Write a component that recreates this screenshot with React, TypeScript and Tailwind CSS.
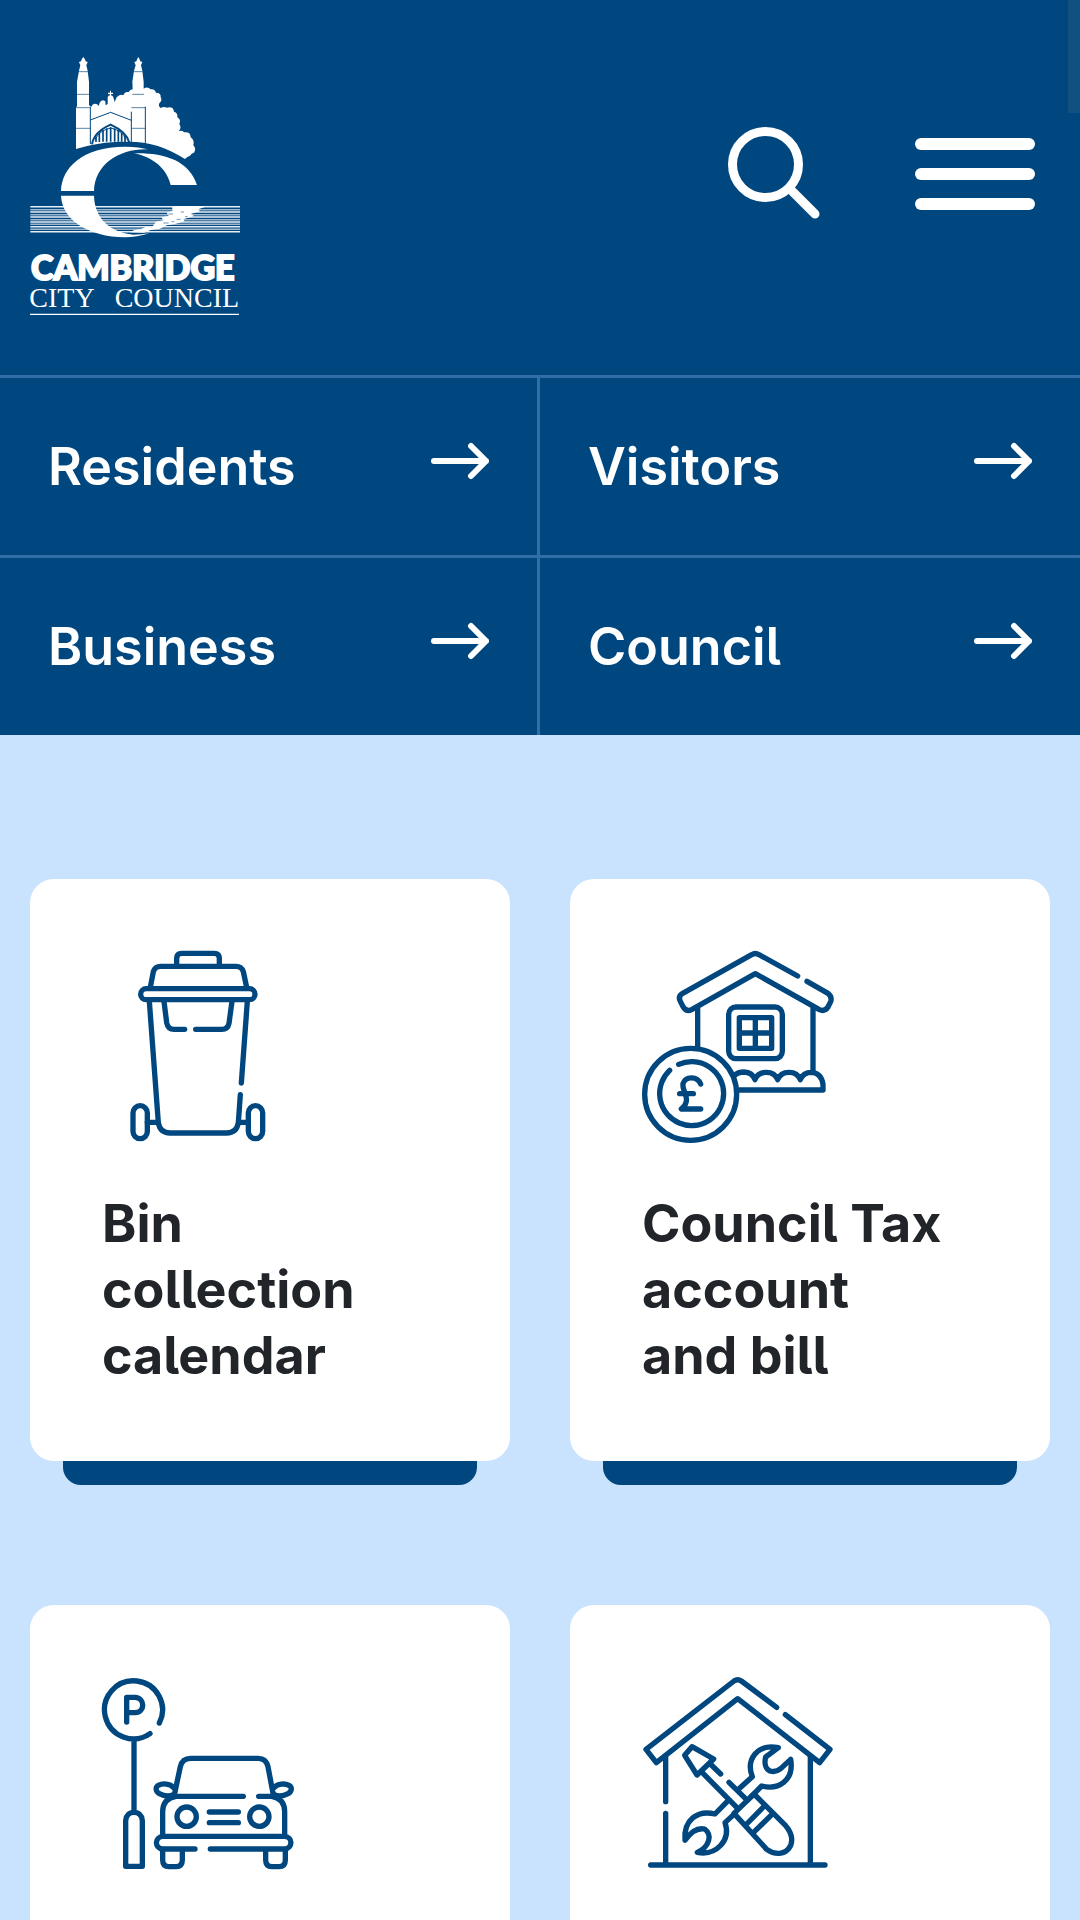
import type { ReactNode } from 'react';

const NAV_LINKS = ['Residents', 'Visitors', 'Business', 'Council'];

// y position of each ripple in the logo's river
const RIVER_LINES = [500, 509, 516, 524, 531, 539, 546, 553, 560, 568, 575];

function Logo() {
  return (
    <svg viewBox="30 24 630 837" className="w-[210px] h-[279px]" fill="#fff" role="img" aria-label="Cambridge City Council">
      {/* Towers, chapel and trees */}
      <path d="M168 327 L168 200 L171 200 L171 125 L177 92 L181 76 L177 66 L183 64 L186 56 L190 51 L194 56 L197 64 L203 66 L199 76 L203 92 L207 125 L207 196 L214 200 Q218 190 225 191 Q232 191 236 198 L239 188 Q247 176 256 184 L257 196 L263 192 L263 172 Q265 166 270 166 L270 163 L264 162 L264 158 L270 158 L270 152 L273 152 L273 158 L279 158 L279 162 L273 163 L273 166 Q279 167 280 172 L284 186 L290 172 Q300 160 310 166 Q314 154 326 156 Q330 148 338 148 L337 125 L342 92 L347 76 L343 66 L349 64 L352 56 L355 51 L358 56 L361 64 L367 66 L363 76 L367 92 L371 125 L371 146 Q382 138 392 148 Q404 146 408 158 Q424 158 422 172 Q428 182 418 190 Q414 198 422 204 Q432 198 440 203 Q460 198 462 215 Q474 218 472 232 Q484 238 478 252 Q486 264 476 274 Q486 270 492 277 Q512 274 512 292 Q524 300 520 316 Q530 326 522 338 Q514 340 510 347 Q502 350 495 357 C440 322 390 305 325 305 C265 304 215 312 168 327 Z" />
      <g fill="none" stroke="#00477f" strokeWidth="2">
        <path d="M175 95 H204 M171 163 H208 M166 203 H210 M166 265 H211 M341 95 H368 M337 163 H372 M334 203 H376 M334 265 H376" />
        <path d="M211 200 V312 M334 215 V306 M376 200 V312 M211 240 L272 217 L334 241" strokeWidth="3" />
        <path d="M216 313 Q222 276 272 254 Q320 276 328 308" strokeWidth="6" />
        <path d="M228 306 V290 M238 306 V278 M249 305 V270 M260 305 V265 M272 305 V262 M284 305 V265 M295 305 V270 M305 305 V278 M315 306 V288" strokeWidth="5" />
        <path d="M226 299 Q236 272 272 264 Q308 272 318 299" strokeWidth="3" />
      </g>

      {/* River */}
      {RIVER_LINES.map((y, i) => (
        <path key={y} d={`M31 ${y} H660`} stroke={i % 2 ? '#9db7cf' : '#e4eef6'} strokeWidth="4.5" />
      ))}

      {/* Letter C formed by the bridge and its reflection */}
      <path d="M123 453 C125 385 185 320 315 320 Q360 321 384 328 C300 325 224 372 222 453 Z" />
      <path d="M342 340 C430 338 507 360 531 435 H452 C440 385 400 352 342 340 Z" />
      <path d="M123 467 H222 C224 535 268 576 340 584 Q365 584 388 580 Q350 592 315 592 C205 590 126 540 123 467 Z" />
      <path d="M330 577 Q345 566 362 568 L378 560 L396 562 L408 545 L430 541 L424 532 L446 528 L440 518 L458 512 L456 502 L470 498 H562 L535 508 L540 514 L512 522 L522 528 L490 538 L494 544 L462 553 L440 556 L420 566 L392 570 L372 578 Z" />
      <path d="M445 522 h14 M470 538 h12 M482 516 h10 M430 549 h16 M495 530 h8 M455 545 h8" stroke="#6f97bd" strokeWidth="3" />

      <text x="33" y="719" fontSize="102" fontWeight="900" stroke="#fff" strokeWidth="6" className="font-['Lato',sans-serif]">CAMBRIDGE</text>
      <g fontSize="84" className="font-['Liberation_Serif',serif]">
        <text x="28" y="802">CITY</text>
        <text x="284" y="802">COUNCIL</text>
      </g>
      <path d="M30 823 H657" stroke="#fff" strokeWidth="4" />
    </svg>
  );
}

function ArrowIcon() {
  return (
    <svg viewBox="0 0 58 38" className="w-[58px] h-[38px] mb-3 shrink-0" fill="none" stroke="currentColor" strokeWidth="6" strokeLinecap="round" strokeLinejoin="round" aria-hidden="true">
      <path d="M3 19 H55 M40 4 L55 19 L40 34" />
    </svg>
  );
}

type IconProps = { viewBox: string; children: ReactNode };

function LineIcon({ viewBox, children }: IconProps) {
  return (
    <svg viewBox={viewBox} className="w-48 h-48 overflow-visible" fill="none" stroke="#00477f" strokeWidth="16" strokeLinecap="round" strokeLinejoin="round" aria-hidden="true">
      {children}
    </svg>
  );
}

function BinIcon() {
  return (
    <LineIcon viewBox="36 63 576 576">
      <path d="M260 108 V85 Q260 70 275 70 H373 Q388 70 388 85 V108" />
      <path d="M181 172 L190 125 Q195 109 212 109 H438 Q455 109 460 125 L470 172" />
      <rect x="152" y="176" width="343" height="33" rx="16.5" />
      <path d="M178 214 L205 578 Q210 609 240 609 H410 Q440 609 445 578 L451 494 M454 459 L472 214" />
      <path d="M222 214 L230 278 Q234 298 252 298 H284 M317 298 H396 Q413 298 417 280 L426 214" />
      <rect x="129" y="527" width="43" height="99" rx="21.5" />
      <rect x="475" y="527" width="43" height="99" rx="21.5" />
      <path d="M172 577 H203 M447 577 H475" />
    </LineIcon>
  );
}

function CouncilTaxIcon() {
  return (
    <LineIcon viewBox="66 63 576 576">
      <path d="M533 138 L417 74 Q406 67 395 74 L188 190 Q173 199 181 214 L189 230 Q199 247 215 239 L406 131 L598 239 Q614 246 624 231 L632 215 Q637 200 624 190 L561 154" />
      <path d="M233 236 V350 M579 236 V420" />
      <rect x="326" y="231" width="161" height="155" rx="22" />
      <path d="M358 263 H455 V355 H358 Z M406 263 V355 M358 309 H455" />
      <path d="M342 437 Q354 426 372 426 Q397 427 405 449 Q413 427 439 427 Q465 427 473 449 Q481 427 507 427 Q533 427 541 449 Q549 427 575 427 Q604 429 609 463 V480 H358" />
      <circle cx="212" cy="493" r="138" />
      <path d="M176 403 A96 96 0 1 1 149 421" />
      <path d="M242 462 C232 439 197 437 189 461 C186 479 203 497 199 514 Q196 529 184 537 H242 M179 491 H220" />
    </LineIcon>
  );
}

function ParkingIcon() {
  return (
    <LineIcon viewBox="36 51 576 576">
      <path d="M208 189 A87 87 0 1 0 180 221 M132 240 V452" />
      <path d="M110 186 V112 H135 C166 114 166 157 135 158 H111" />
      <path d="M107 619 V482 Q109 457 132 457 Q155 457 157 482 V619 Z" />
      <path d="M254 400 L271 320 Q277 295 302 295 H505 Q528 295 534 320 L549 400" />
      <path d="M250 382 C240 371 218 369 205 376 C195 382 197 395 208 401 C225 410 241 409 252 403 M553 382 C563 371 584 369 597 376 C608 382 605 395 594 401 C577 410 562 409 551 403" />
      <path d="M460 409 H258 Q219 415 218 454 V524 M506 409 H545 Q583 415 584 454 V524" />
      <circle cx="290" cy="470" r="29" />
      <circle cx="508" cy="470" r="29" />
      <path d="M358 456 H445 M358 488 H445" />
      <path d="M315 567 H218 C192 564 194 531 218 529 H584 C609 531 609 564 584 567 H361" />
      <path d="M218 570 V600 Q218 620 237 620 H258 Q277 620 277 600 V570 M527 570 V600 Q527 620 546 620 H567 Q586 620 586 600 V570" />
    </LineIcon>
  );
}

function RepairsIcon() {
  return (
    <LineIcon viewBox="66 51 576 576">
      <path d="M470 142 L364 63 Q353 55 342 63 L78 268 L109 308 L353 116 L599 308 L630 268 L496 164" />
      <path d="M137 290 V425 M137 460 V613 M571 290 V613 M92 615 H615" />
      <path d="M194 286 L216 260 L281 297 L231 345 Z" />
      <path d="M247 338 L353 445 M271 312 L302 342 M327 367 L382 421" />
      <path d="M342 460 L402 402 L497 497 C543 550 493 605 440 568 Z M380 492 L430 441 M403 515 L453 466" />
      <path d="M357 386 L397 350 C377 300 411 250 475 263 L437 291 C432 311 437 327 450 333 Q467 338 482 326 L512 298 C523 361 476 391 425 378 L391 412" />
      <path d="M322 424 L285 462 C232 449 190 480 195 541 Q222 501 254 507 Q272 521 266 541 Q260 564 232 577 C288 588 334 541 315 488 L345 460" />
    </LineIcon>
  );
}

const CARDS = [
  { title: 'Bin collection calendar', icon: BinIcon },
  { title: 'Council Tax account and\u00a0bill', icon: CouncilTaxIcon },
  { label: 'Parking', icon: ParkingIcon },
  { label: 'Repairs', icon: RepairsIcon },
];

export default function App() {
  return (
    <div className="relative h-screen overflow-hidden bg-[#c9e2fd] font-['Inter',sans-serif] text-[52px] leading-[66px] [font-feature-settings:'cv05']">
      <header className="bg-[#00477f] text-white">
        <div className="flex justify-between pl-[30px] pr-[45px] py-12">
          <a href="#home">
            <Logo />
          </a>
          <div className="flex items-center gap-24 pb-7">
            <button type="button" aria-label="Search">
              <svg viewBox="0 0 92 92" className="w-[92px] h-[92px] overflow-visible" fill="none" stroke="currentColor" strokeWidth="9" strokeLinecap="round">
                <circle cx="38.5" cy="36.5" r="33" />
                <path d="M63 61 L88 86" />
              </svg>
            </button>
            <button type="button" aria-label="Menu" className="flex flex-col gap-[18px] w-[120px]">
              <span className="h-3 w-full rounded-full bg-white" />
              <span className="h-3 w-full rounded-full bg-white" />
              <span className="h-3 w-full rounded-full bg-white" />
            </button>
          </div>
        </div>

        <nav className="grid grid-cols-2">
          {NAV_LINKS.map(name => (
            <a
              key={name}
              href={`#${name.toLowerCase()}`}
              className="flex items-center justify-between h-[180px] px-12 border-t-[3px] odd:border-r-[3px] border-[#316ea8] font-semibold"
            >
              {name}
              <ArrowIcon />
            </a>
          ))}
        </nav>
      </header>

      {/* Popular services */}
      <main className="grid grid-cols-2 gap-x-[60px] gap-y-36 px-[30px] pt-36">
        {CARDS.map(({ title, label, icon: Icon }, i) => (
          <a key={i} href="#service" aria-label={label} className="relative flex flex-col gap-12 min-h-[582px] p-[72px] rounded-3xl bg-white text-[#212529]">
            <Icon />
            {title && <h2 className="font-bold">{title}</h2>}
            <span className="absolute top-full inset-x-[33px] h-6 rounded-b-[18px] bg-[#00477f]" />
          </a>
        ))}
      </main>

      {/* Overlay scroll thumb */}
      <div className="absolute top-0 right-0 w-3 h-[113px] bg-[#11507f]" />
    </div>
  );
}
